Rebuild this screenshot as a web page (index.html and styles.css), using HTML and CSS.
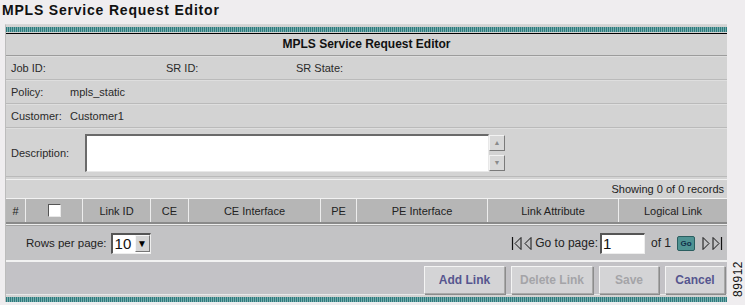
FILE: index.html
```html
<!DOCTYPE html>
<html lang="en">
<head>
    <meta charset="UTF-8">
    <title>MPLS Service Request Editor</title>
    <link rel="stylesheet" href="styles.css">
</head>
<body>
    <h1 class="page-title">MPLS Service Request Editor</h1>
    <div class="layout">
        <div class="editor">
            <div class="teal-bar"></div>
            <div class="rule"></div>
            <div class="editor-head">MPLS Service Request Editor</div>

            <div class="info-row">
                <span class="cell w155">Job ID:</span>
                <span class="cell w130">SR ID:</span>
                <span class="cell">SR State:</span>
            </div>
            <div class="info-row">
                <span class="cell w59">Policy:</span>
                <span class="cell">mpls_static</span>
            </div>
            <div class="info-row">
                <span class="cell w59">Customer:</span>
                <span class="cell">Customer1</span>
            </div>
            <div class="info-row desc-row">
                <span class="cell w74">Description:</span>
                <div class="textbox"></div>
                <div class="scroller">
                    <span class="scroll-btn">&#9650;</span>
                    <span class="scroll-btn">&#9660;</span>
                </div>
            </div>

            <div class="records">Showing 0 of 0 records</div>

            <div class="links-head">
                <span>#</span>
                <span><span class="checkbox"></span></span>
                <span>Link ID</span>
                <span>CE</span>
                <span>CE Interface</span>
                <span>PE</span>
                <span>PE Interface</span>
                <span>Link Attribute</span>
                <span>Logical Link</span>
            </div>

            <div class="pager">
                <div class="rows-per-page">
                    Rows per page:
                    <div class="select">
                        <span class="select-value">10</span>
                        <span class="select-btn">&#9660;</span>
                    </div>
                </div>
                <div class="goto">
                    <svg class="nav" width="11" height="15" viewBox="0 0 11 15"><path d="M1.5 1v13" stroke="#111" stroke-width="1.2"/><path d="M10 1.5L4 7.5l6 6z" fill="none" stroke="#111"/></svg>
                    <svg class="nav" width="8" height="15" viewBox="0 0 8 15"><path d="M7 1.5L1 7.5l6 6z" fill="none" stroke="#111"/></svg>
                    <span class="goto-label">Go to page:</span>
                    <div class="page-input">1</div>
                    <span class="of">of 1</span>
                    <span class="go-btn">Go</span>
                    <svg class="nav" width="8" height="15" viewBox="0 0 8 15"><path d="M1 1.5l6 6-6 6z" fill="none" stroke="#111"/></svg>
                    <svg class="nav" width="11" height="15" viewBox="0 0 11 15"><path d="M1 1.5l6 6-6 6z" fill="none" stroke="#111"/><path d="M9.5 1v13" stroke="#111" stroke-width="1.2"/></svg>
                </div>
            </div>

            <div class="actions">
                <button class="btn add">Add Link</button>
                <button class="btn del disabled">Delete Link</button>
                <button class="btn save disabled">Save</button>
                <button class="btn cancel">Cancel</button>
            </div>
            <div class="teal-bar bottom"></div>
        </div>
        <div class="fig-no">89912</div>
    </div>
</body>
</html>
```

FILE: styles.css
```css
body {
    margin: 0;
    background: #efedef;
    font-family: "Liberation Sans", Arial, sans-serif;
    font-size: 11px;
    color: #222;
    overflow: hidden;
}
.page-title {
    margin: 0;
    height: 24px;
    padding: 2px 0 0 2px;
    box-sizing: border-box;
    font-size: 14px;
    font-weight: bold;
    letter-spacing: 0.8px;
    color: #111;
    line-height: 16px;
}
.layout {
    display: flex;
    align-items: flex-end;
}
.editor {
    margin-left: 5px;
    width: 721px;
    background: #d3d3d3;
    border-left: 1px solid #bcbcbc;
    border-top: 1px solid #d8d8d8;
    padding-top: 2px;
}
.teal-bar {
    height: 5px;
    background: repeating-linear-gradient(90deg, #2c7b7d 0 1px, #78acad 1px 2px);
}
.teal-bar.bottom {
    margin-top: 2px;
}
.rule {
    height: 1px;
    margin-top: 1px;
    background: #000;
}
.editor-head {
    height: 21px;
    line-height: 21px;
    text-align: center;
    font-weight: bold;
    font-size: 12px;
    color: #111;
    border-bottom: 1px solid #9c9c9c;
}
.info-row {
    display: flex;
    align-items: center;
    height: 22px;
    padding-left: 5px;
    border-top: 1px solid #dedede;
    border-bottom: 1px solid #bababa;
}
.cell {
    color: #2a2a2a;
}
.w155 { width: 155px; }
.w130 { width: 130px; }
.w59 { width: 59px; }
.w74 { width: 74px; }
.desc-row {
    height: 47px;
}
.textbox {
    width: 401px;
    height: 35px;
    background: #fff;
    border-top: 2px solid #6a6a6a;
    border-left: 2px solid #6a6a6a;
    border-right: 1px solid #e8e8e8;
    border-bottom: 1px solid #e8e8e8;
    margin-top: 1px;
}
.scroller {
    display: flex;
    flex-direction: column;
    gap: 4px;
    margin-top: 1px;
}
.scroll-btn {
    width: 14px;
    height: 14px;
    background: #d8d8d8;
    border: 1px solid #7a7a7a;
    border-top-color: #f2f2f2;
    border-left-color: #f2f2f2;
    font-size: 7px;
    line-height: 14px;
    text-align: center;
    color: #8a8a8a;
}
.records {
    margin-top: 2px;
    border-top: 1px solid #f0f0f0;
    height: 18px;
    line-height: 18px;
    text-align: right;
    padding-right: 3px;
    color: #222;
    border-bottom: 1px solid #f2f2f2;
}
.links-head {
    display: grid;
    grid-template-columns: 19px 56px 67px 37px 131px 35px 130px 130px 1fr;
    gap: 1px;
    background: #ededed;
}
.links-head > span {
    display: flex;
    align-items: center;
    justify-content: center;
    height: 23px;
    background: #b6b6b6;
    color: #222;
}
.checkbox {
    display: inline-block;
    width: 11px;
    height: 11px;
    background: #fff;
    border-top: 1px solid #555;
    border-left: 1px solid #555;
    border-right: 1px solid #e8e8e8;
    border-bottom: 1px solid #e8e8e8;
}
.pager {
    display: flex;
    justify-content: space-between;
    align-items: center;
    height: 36px;
    padding: 0 0 0 20px;
    background: #c3c3c5;
    border-top: 2px solid #8a8a8a;
    box-shadow: inset 0 1px 0 #ececec, inset 0 2px 0 #a3a3a3;
    border-bottom: 2px solid #f2f2f2;
    font-size: 12px;
}
.rows-per-page {
    display: flex;
    align-items: center;
    gap: 4px;
    padding-top: 2px;
    font-size: 11.5px;
}
.select {
    display: flex;
    align-items: center;
    height: 18px;
    width: 37px;
    background: #fff;
    border-top: 2px solid #555;
    border-left: 2px solid #555;
    border-right: 1px solid #eee;
    border-bottom: 1px solid #eee;
}
.select-value {
    flex: 1;
    padding-left: 2px;
    font-size: 15px;
    line-height: 18px;
    color: #111;
}
.select-btn {
    width: 15px;
    height: 17px;
    background: #d6d6d6;
    border: 1px solid #777;
    border-top-color: #f6f6f6;
    border-left-color: #f6f6f6;
    box-sizing: border-box;
    font-size: 10px;
    line-height: 15px;
    text-align: center;
    color: #000;
}
.goto {
    display: flex;
    align-items: center;
    padding-top: 2px;
    padding-right: 2px;
}
.nav {
    display: block;
    margin-right: 2px;
}
.goto-label {
    margin-left: 1px;
    color: #222;
}
.page-input {
    width: 41px;
    height: 18px;
    margin-left: 2px;
    background: #fff;
    border-top: 2px solid #555;
    border-left: 2px solid #555;
    border-right: 1px solid #eee;
    border-bottom: 1px solid #eee;
    font-size: 15px;
    line-height: 18px;
    padding-left: 1px;
    color: #111;
}
.of {
    margin-left: 6px;
    margin-right: 6px;
}
.go-btn {
    width: 16px;
    height: 13px;
    margin-right: 7px;
    background: #4f9393;
    border: 1px solid #2b5e60;
    border-radius: 2px;
    font-size: 8px;
    font-weight: bold;
    line-height: 13px;
    text-align: center;
    color: #0f2f4a;
}
.actions {
    display: flex;
    justify-content: flex-end;
    gap: 6px;
    height: 32px;
    padding-right: 2px;
    align-items: flex-end;
    background: #c3c2c6;
    border-bottom: 1px solid #e8e8e8;
}
.btn {
    height: 28px;
    margin: 0;
    padding: 0;
    background: #d4d4d6;
    border: 1px solid #a8a8a8;
    border-top-color: #f4f4f4;
    border-left-color: #f4f4f4;
    box-shadow: 1px 1px 0 #8c8c8c;
    font-family: "Liberation Sans", Arial, sans-serif;
    font-size: 12px;
    font-weight: bold;
    color: #56568f;
}
.btn.disabled {
    color: #a4a4a8;
}
.add { width: 81px; }
.del { width: 82px; }
.save { width: 60px; }
.cancel { width: 60px; }
.fig-no {
    margin-left: 4px;
    margin-bottom: 5px;
    writing-mode: vertical-rl;
    transform: rotate(180deg);
    font-size: 12px;
    letter-spacing: 0.5px;
    color: #111;
}
```
